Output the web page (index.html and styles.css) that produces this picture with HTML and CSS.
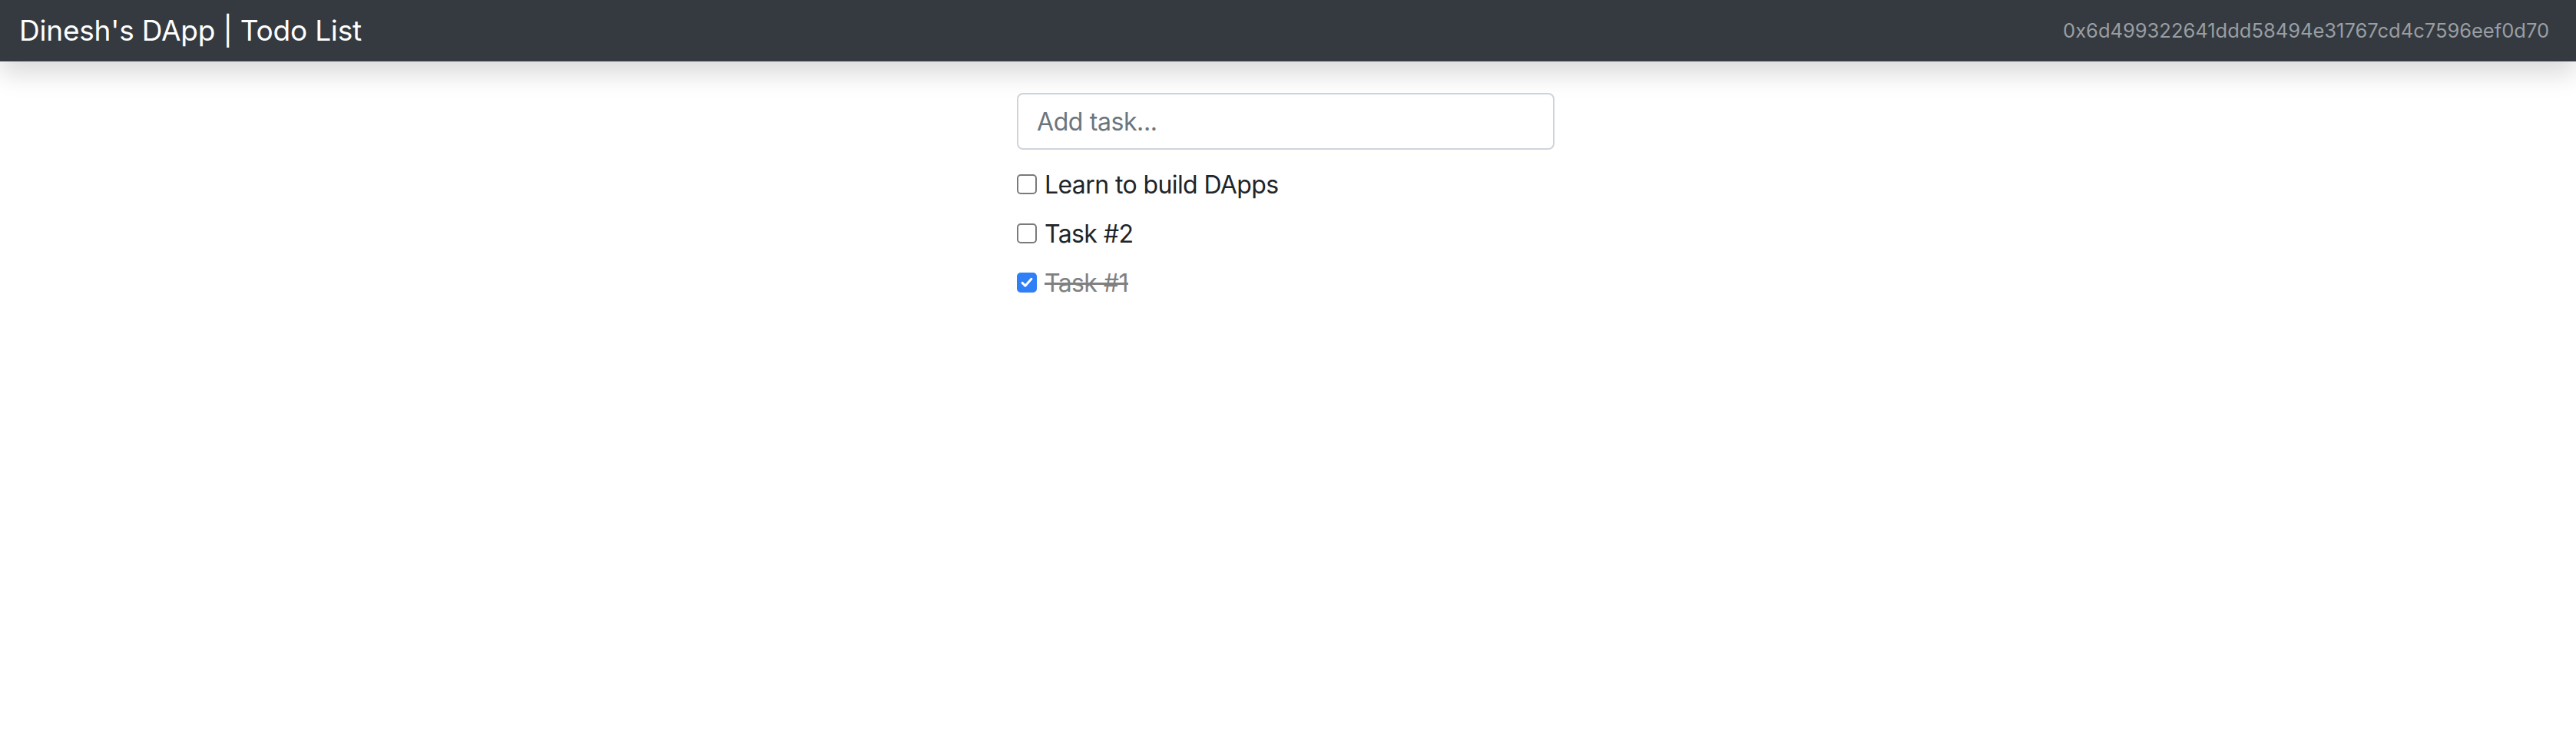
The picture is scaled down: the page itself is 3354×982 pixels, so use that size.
FILE: index.html
```html
<!DOCTYPE html>
<html lang="en">
<head>
<meta charset="utf-8">
<title>Dinesh's DApp | Todo List</title>
<link rel="stylesheet" href="styles.css">
</head>
<body>
  <nav class="navbar">
    <span class="brand">Dinesh's DApp | Todo List</span>
    <span class="account">0x6d499322641ddd58494e31767cd4c7596eef0d70</span>
  </nav>
  <main class="main">
    <div class="content">
      <form class="task-form">
        <input class="task-input" type="text" placeholder="Add task...">
      </form>
      <ul class="task-list">
        <li class="task"><label class="task-label"><input class="task-check" type="checkbox"><span class="task-text">Learn to build DApps</span></label></li>
        <li class="task"><label class="task-label"><input class="task-check" type="checkbox"><span class="task-text">Task #2</span></label></li>
        <li class="task done"><label class="task-label"><input class="task-check" type="checkbox" checked><span class="task-text">Task #1</span></label></li>
      </ul>
    </div>
  </main>
</body>
</html>
```
FILE: styles.css
```css
* { box-sizing: border-box; }
html, body { margin: 0; padding: 0; }
body {
  background: #fff;
  font-family: Inter, "Liberation Sans", Arial, sans-serif;
  color: #212529;
  font-size: 32px;
}
.navbar {
  height: 80px;
  background: #343a40;
  display: flex;
  align-items: center;
  justify-content: space-between;
  padding: 0 35px 0 25px;
  box-shadow: 0 16px 32px rgba(0,0,0,0.15);
  position: relative;
  z-index: 2;
}
.brand {
  color: #fff;
  font-size: 37px;
  line-height: 60px;
  letter-spacing: -0.2px;
}
.account {
  color: #9a9ea3;
  font-size: 25.5px;
  line-height: 38px;
}
.main {
  display: flex;
  justify-content: center;
  padding: 41px 6px 0 0;
}
.content {
  width: 700px;
}
.task-form { margin: 0 0 22px 0; }
.task-input {
  display: block;
  width: 100%;
  height: 74px;
  padding: 0 24px;
  font-family: inherit;
  font-size: 32px;
  letter-spacing: -0.4px;
  color: #495057;
  border: 2px solid #ced4da;
  border-radius: 8px;
  background: #fff;
  outline: none;
}
.task-input::placeholder { color: #6c757d; }
.task-list { list-style: none; margin: 0; padding: 0; }
.task { margin-bottom: 16px; }
.task-label {
  display: flex;
  align-items: center;
  height: 48px;
  line-height: 48px;
  font-size: 32px;
  letter-spacing: -0.6px;
}
.task-check {
  appearance: none;
  -webkit-appearance: none;
  width: 26px;
  height: 26px;
  margin: -2px 10px 0 0;
  border: 2px solid #7a7a7a;
  border-radius: 5px;
  background: #fff;
  flex: none;
}
.task-check:checked {
  background: #2f7ff7 url("data:image/svg+xml,%3Csvg xmlns='http://www.w3.org/2000/svg' viewBox='0 0 26 26'%3E%3Cpath d='M6 13.5l4.5 4.5L20 7.5' fill='none' stroke='white' stroke-width='3.6' stroke-linecap='round' stroke-linejoin='round'/%3E%3C/svg%3E") center/100% 100% no-repeat;
  border-color: #2f7ff7;
}
.done .task-text {
  color: #808080;
  text-decoration: line-through;
}
```
